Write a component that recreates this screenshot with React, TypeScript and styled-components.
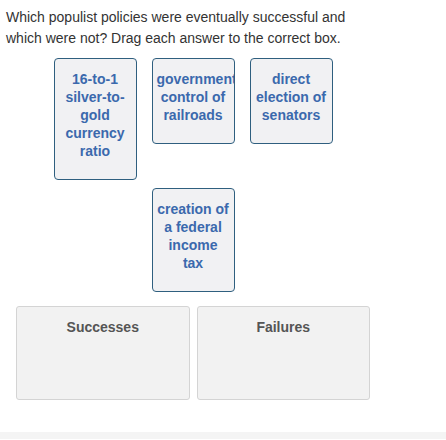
import styled, { createGlobalStyle } from 'styled-components';

const GlobalStyle = createGlobalStyle`
  body {
    margin: 0;
    background: #ffffff;
    font-family: "Liberation Sans", Arial, sans-serif;
  }
`;

const Page = styled.div`
  padding: 7px 0 0 6px;
`;

const Question = styled.p`
  margin: 0;
  font-size: 14px;
  line-height: 21px;
  color: #333333;
  width: 362px;
`;

const Board = styled.div`
  margin: 9px 0 0 10px;
  width: 354px;
  display: flex;
  flex-direction: column;
  gap: 14px;
`;

const AnswerPool = styled.div`
  display: flex;
  flex-wrap: wrap;
  justify-content: center;
  align-items: flex-start;
  column-gap: 15px;
  row-gap: 8px;
`;

const AnswerCard = styled.div`
  box-sizing: border-box;
  width: 83px;
  padding: 11px 4px 19px;
  border: 1px solid #2f5f7f;
  border-radius: 4px;
  background: #f1f1f3;
  color: #3b69ad;
  font-size: 14px;
  font-weight: 700;
  line-height: 18px;
  text-align: center;
  overflow: hidden;
`;

const Zones = styled.div`
  display: grid;
  grid-template-columns: 1fr 1fr;
  column-gap: 7px;
`;

const DropZone = styled.div`
  box-sizing: border-box;
  height: 94px;
  padding-top: 11px;
  border: 1px solid #d4d4d4;
  border-radius: 3px;
  background: #f2f2f2;
  color: #555555;
  font-size: 14px;
  font-weight: 700;
  line-height: 18px;
  text-align: center;
`;

const FooterStrip = styled.div`
  margin-top: 32px;
  height: 7px;
  background: #f4f4f4;
`;

const answers = [
  '16-to-1 silver-to-gold currency ratio',
  'government control of railroads',
  'direct election of senators',
  'creation of a federal income tax',
];

const zones = ['Successes', 'Failures'];

const App = () => {
  return (
    <>
      <GlobalStyle />
      <Page>
        <Question>
          Which populist policies were eventually successful and which were
          not? Drag each answer to the correct box.
        </Question>
        <Board>
          <AnswerPool>
            {answers.map((a) => (
              <AnswerCard key={a}>{a}</AnswerCard>
            ))}
          </AnswerPool>
          <Zones>
            {zones.map((z) => (
              <DropZone key={z}>{z}</DropZone>
            ))}
          </Zones>
        </Board>
      </Page>
      <FooterStrip />
    </>
  );
};

export default App;
